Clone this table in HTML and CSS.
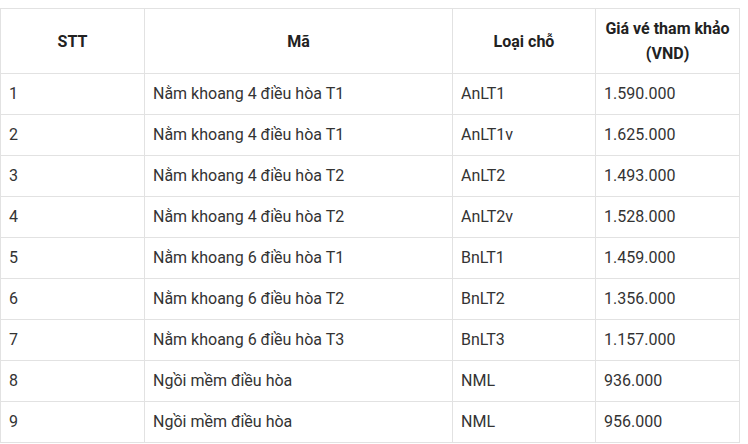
FILE: index.html
```html
<!DOCTYPE html>
<html lang="vi">
<head>
<meta charset="utf-8">
<link rel="stylesheet" href="styles.css">
</head>
<body>
<table class="fares">
  <colgroup>
    <col class="c1"><col class="c2"><col class="c3"><col class="c4">
  </colgroup>
  <thead>
    <tr><th>STT</th><th>Mã</th><th>Loại chỗ</th><th>Giá vé tham khảo (VND)</th></tr>
  </thead>
  <tbody>
    <tr><td>1</td><td>Nằm khoang 4 điều hòa T1</td><td>AnLT1</td><td>1.590.000</td></tr>
    <tr><td>2</td><td>Nằm khoang 4 điều hòa T1</td><td>AnLT1v</td><td>1.625.000</td></tr>
    <tr><td>3</td><td>Nằm khoang 4 điều hòa T2</td><td>AnLT2</td><td>1.493.000</td></tr>
    <tr><td>4</td><td>Nằm khoang 4 điều hòa T2</td><td>AnLT2v</td><td>1.528.000</td></tr>
    <tr><td>5</td><td>Nằm khoang 6 điều hòa T1</td><td>BnLT1</td><td>1.459.000</td></tr>
    <tr><td>6</td><td>Nằm khoang 6 điều hòa T2</td><td>BnLT2</td><td>1.356.000</td></tr>
    <tr><td>7</td><td>Nằm khoang 6 điều hòa T3</td><td>BnLT3</td><td>1.157.000</td></tr>
    <tr><td>8</td><td>Ngồi mềm điều hòa</td><td>NML</td><td>936.000</td></tr>
    <tr><td>9</td><td>Ngồi mềm điều hòa</td><td>NML</td><td>956.000</td></tr>
  </tbody>
</table>
</body>
</html>
```
FILE: styles.css
```css
html, body {
  margin: 0;
  padding: 0;
  background: #ffffff;
}
body {
  padding-top: 8px;
  font-family: Roboto, "Noto Sans", Arial, sans-serif;
  font-size: 16px;
  color: #333333;
}
.fares {
  border-collapse: collapse;
  table-layout: fixed;
  width: 739px;
}
.c1 { width: 144px; }
.c2 { width: 308px; }
.c3 { width: 143px; }
.c4 { width: 144px; }
.fares th,
.fares td {
  border: 1px solid #e2e2e2;
  padding: 0 8px;
  text-align: left;
  vertical-align: middle;
}
.fares th {
  height: 64px;
  font-weight: 700;
  color: #222222;
  text-align: center;
  line-height: 25px;
}
.fares td {
  height: 40px;
  line-height: 20px;
}
```
